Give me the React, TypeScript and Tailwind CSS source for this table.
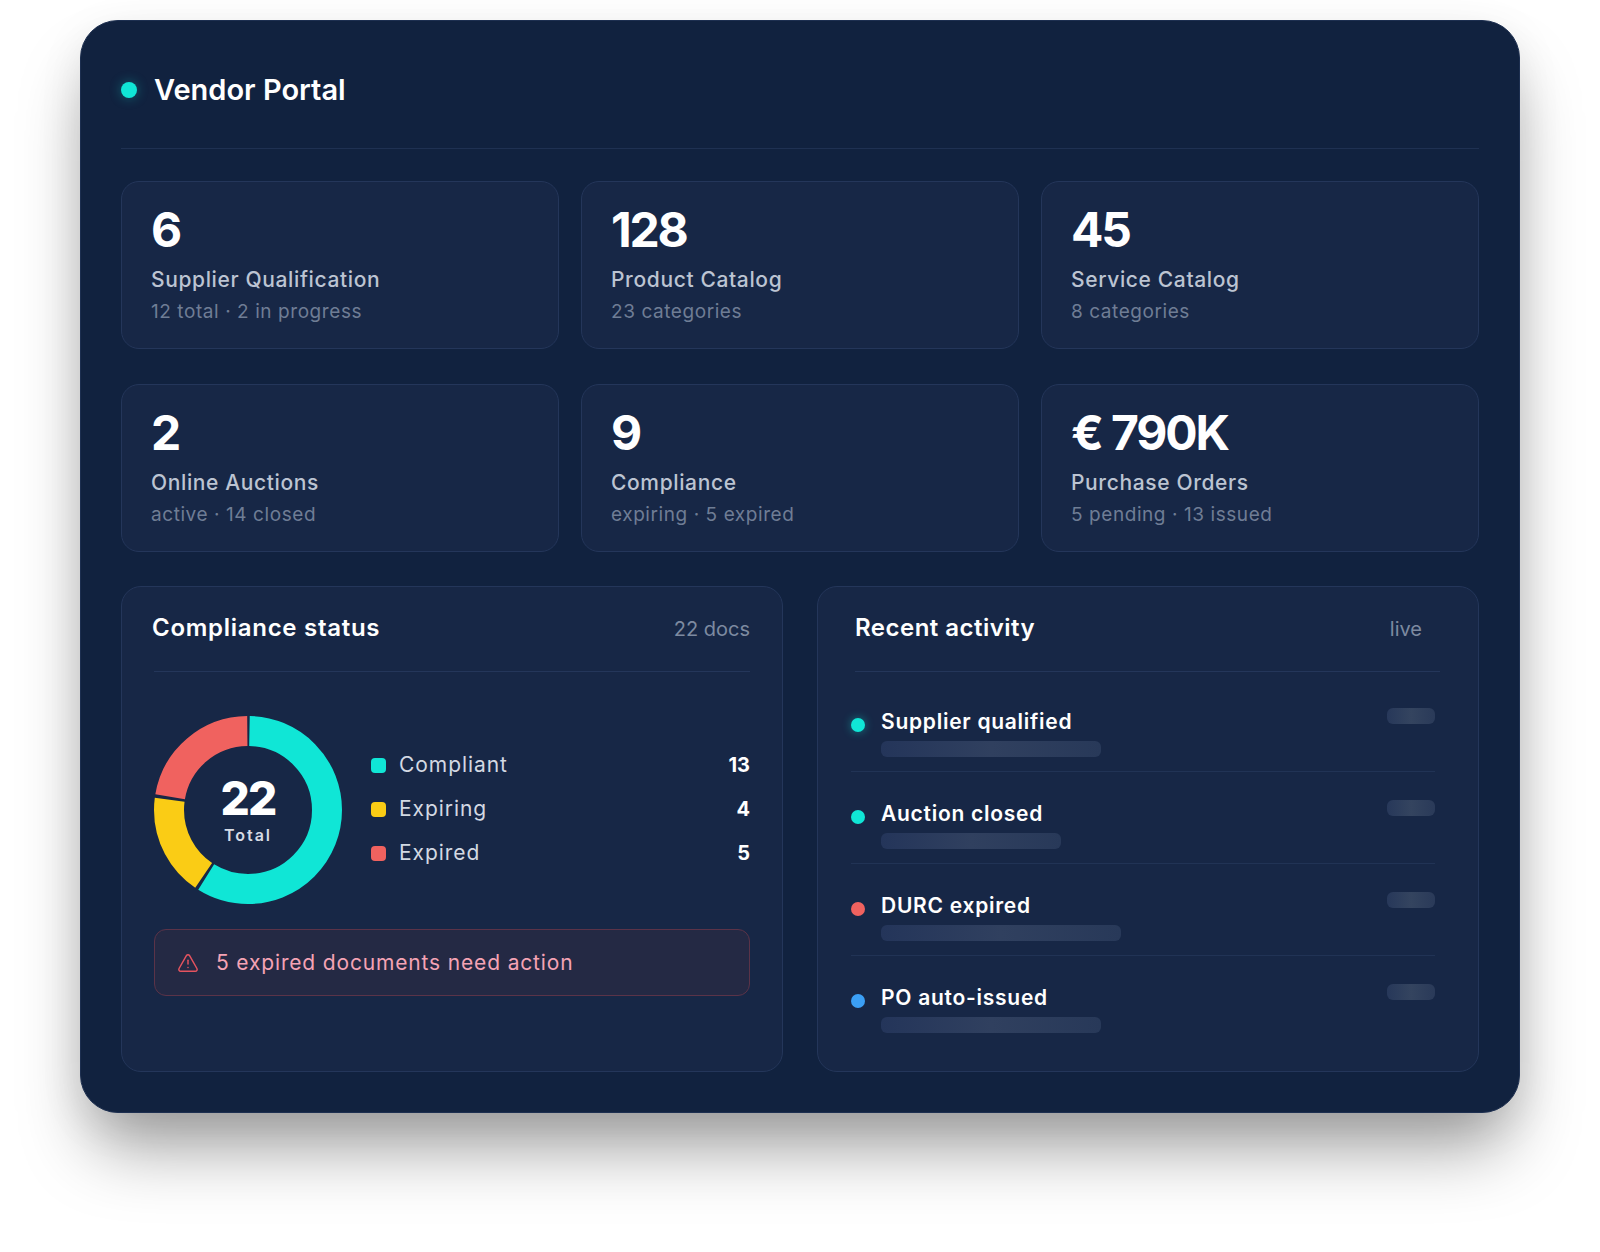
import { TriangleAlert } from "lucide-react"

const stats = [
  { value: "6", label: "Supplier Qualification", sub: "12 total · 2 in progress" },
  { value: "128", label: "Product Catalog", sub: "23 categories" },
  { value: "45", label: "Service Catalog", sub: "8 categories" },
  { value: "2", label: "Online Auctions", sub: "active · 14 closed" },
  { value: "9", label: "Compliance", sub: "expiring · 5 expired" },
  { value: "€ 790K", label: "Purchase Orders", sub: "5 pending · 13 issued" },
]

const legend = [
  { label: "Compliant", value: 13, color: "#10e6d6", swatch: "bg-[#10e6d6]" },
  { label: "Expiring", value: 4, color: "#facc15", swatch: "bg-[#facc15]" },
  { label: "Expired", value: 5, color: "#f0625f", swatch: "bg-[#f0625f]" },
]

const activity = [
  { title: "Supplier qualified", dot: "bg-[#10e6d6] shadow-[0_0_10px_rgba(16,230,214,0.45)]", bar: "w-[220px]" },
  { title: "Auction closed", dot: "bg-[#10e6d6]", bar: "w-[180px]" },
  { title: "DURC expired", dot: "bg-[#f0625f]", bar: "w-[240px]" },
  { title: "PO auto-issued", dot: "bg-[#3b9ff5]", bar: "w-[220px]" },
]

const Donut = () => {
  const r = 79
  const c = 2 * Math.PI * r
  const total = legend.reduce((s, l) => s + l.value, 0)
  const gap = 3
  let start = 0

  return (
    <div className="relative h-[188px] w-[188px] shrink-0">
      <svg width="188" height="188" viewBox="0 0 188 188" className="-rotate-90">
        {legend.map((seg) => {
          const len = (seg.value / total) * c
          const el = (
            <circle
              key={seg.label}
              cx="94"
              cy="94"
              r={r}
              fill="none"
              stroke={seg.color}
              strokeWidth="30"
              strokeDasharray={`${len - gap} ${c - len + gap}`}
              strokeDashoffset={-(start + gap / 2)}
            />
          )
          start += len
          return el
        })}
      </svg>
      <div className="absolute inset-0 flex flex-col items-center justify-center pt-[5px]">
        <span className="text-[46px] font-extrabold leading-[36px] tracking-[-0.04em] text-white">22</span>
        <span className="mt-[9px] text-[16px] font-semibold leading-[20px] tracking-[0.12em] text-[#d5dbe5]">
          Total
        </span>
      </div>
    </div>
  )
}

export default function App() {
  return (
    <div className="min-h-screen bg-white px-20 pt-5 pb-[141px] font-['Inter','Noto_Sans',sans-serif]">
      <div className="mx-auto w-[1440px] rounded-[38px] border border-[#1d2f50] bg-[#11223f] p-10 shadow-[0_45px_70px_-12px_rgba(0,0,0,0.38),0_12px_45px_rgba(0,0,0,0.08)]">
        {/* header */}
        <div className="border-b border-[#1f3152] pb-[29px]">
          <div className="flex h-[58px] items-center gap-[17px]">
            <span className="h-4 w-4 rounded-full bg-[#10e6d6] shadow-[0_0_12px_rgba(16,230,214,0.35)]" />
            <span className="text-[29px] font-semibold text-white">Vendor Portal</span>
          </div>
        </div>

        {/* stat cards */}
        <div className="mt-8 grid grid-cols-3 gap-x-[22px] gap-y-[35px]">
          {stats.map((s) => (
            <div
              key={s.label}
              className="rounded-[18px] border border-[#24365a] bg-[#172746] px-[29px] pt-6 pb-[23px]"
            >
              <div className="text-[48px] font-bold leading-[48px] tracking-[-0.045em] text-white">{s.value}</div>
              <div className="mt-3 text-[21px] font-medium leading-[28px] tracking-[0.03em] text-[#bcc4d2]">
                {s.label}
              </div>
              <div className="mt-[5px] text-[19px] leading-[26px] tracking-[0.03em] text-[#6f7d95]">{s.sub}</div>
            </div>
          ))}
        </div>

        {/* panels */}
        <div className="mt-[34px] grid grid-cols-2 gap-[34px]">
          <div className="rounded-[20px] border border-[#24365a] bg-[#172746] px-8 pt-[26px]">
            <div className="flex items-baseline justify-between border-b border-[#24365a] pb-[27px]">
              <span className="-ml-[2px] text-[24px] font-semibold leading-[30px] tracking-[0.03em] text-white">
                Compliance status
              </span>
              <span className="text-[20px] text-[#7d8aa0]">22 docs</span>
            </div>

            <div className="mt-[44px] flex items-center gap-[29px]">
              <Donut />
              <div className="-mt-[2px] flex flex-1 flex-col">
                {legend.map((l) => (
                  <div key={l.label} className="flex h-[44px] items-center">
                    <span className={`h-[15px] w-[15px] rounded-[4px] ${l.swatch}`} />
                    <span className="ml-[13px] flex-1 text-[21px] tracking-[0.045em] text-[#d3d9e3]">{l.label}</span>
                    <span className="text-[20px] font-bold text-white">{l.value}</span>
                  </div>
                ))}
              </div>
            </div>

            <div className="mt-[25px] flex h-[67px] items-center gap-[17px] rounded-[12px] border border-[#5b3348] bg-[#242944] pl-[22px] pr-6">
              <TriangleAlert size={22} strokeWidth={1.6} className="text-[#e5535f]" />
              <span className="text-[21px] tracking-[0.04em] text-[#f5a3b5]">5 expired documents need action</span>
            </div>
          </div>

          <div className="rounded-[20px] border border-[#24365a] bg-[#172746] px-8 pt-[26px] pb-[24px]">
            <div className="ml-[5px] mr-[6px] flex items-baseline justify-between border-b border-[#24365a] pb-[27px]">
              <span className="text-[24px] font-semibold leading-[30px] tracking-[0.02em] text-white">
                Recent activity
              </span>
              <span className="pr-[18px] text-[20px] text-[#7d8aa0]">live</span>
            </div>

            <div className="mt-2 ml-[1px] mr-[11px] flex flex-col">
              {activity.map((a, i) => (
                <div
                  key={a.title}
                  className={`flex items-start pt-[27px] pb-[14px] ${
                    i < activity.length - 1 ? "border-b border-[#213355]" : ""
                  }`}
                >
                  <span className={`mt-[11px] h-[14px] w-[14px] shrink-0 rounded-full ${a.dot}`} />
                  <div className="ml-4 flex-1">
                    <div className="text-[21px] font-semibold leading-[30px] tracking-[0.035em] text-white">
                      {a.title}
                    </div>
                    <div
                      className={`mt-1 h-4 rounded-md bg-linear-to-r from-[#24355a] via-[#30405f] to-[#283959] ${a.bar}`}
                    />
                  </div>
                  <div className="mt-[1px] h-4 w-12 rounded-md bg-linear-to-r from-[#27385a] via-[#34445f] to-[#2a3a59]" />
                </div>
              ))}
            </div>
          </div>
        </div>
      </div>
    </div>
  )
}
